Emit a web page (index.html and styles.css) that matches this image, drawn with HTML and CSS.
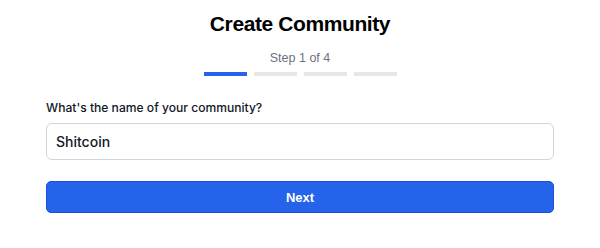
FILE: index.html
```
<!DOCTYPE html>
<html>
<head>
<meta charset="utf-8">
<link rel="stylesheet" href="styles.css">
</head>
<body>
<div class="page">
  <h1 class="title">Create Community</h1>
  <div class="step">Step 1 of 4</div>
  <div class="progress">
    <span class="bar active"></span>
    <span class="bar"></span>
    <span class="bar"></span>
    <span class="bar"></span>
  </div>
  <label class="label" for="name">What's the name of your community?</label>
  <input class="input" id="name" type="text" value="Shitcoin">
  <button class="btn">Next</button>
</div>
</body>
</html>
```
FILE: styles.css
```
html, body {
  margin: 0;
  padding: 0;
  background: #ffffff;
}
body {
  font-family: "Liberation Sans", Arial, sans-serif;
  color: #111827;
}
.page {
  width: 508px;
  margin: 0 auto;
  padding-top: 10px;
  display: flex;
  flex-direction: column;
}
.title {
  margin: 0;
  font-size: 21px;
  line-height: 28px;
  font-weight: 700;
  text-align: center;
  color: #000;
  letter-spacing: -0.4px;
}
.step {
  margin-top: 11px;
  font-size: 12.5px;
  line-height: 18px;
  text-align: center;
  color: #6b7280;
}
.progress {
  margin-top: 5px;
  display: flex;
  justify-content: center;
  gap: 7px;
}
.bar {
  width: 43px;
  height: 4px;
  background: #e5e7eb;
}
.bar.active {
  background: #2563eb;
}
.label {
  margin-top: 23px;
  font-family: Inter, "Liberation Sans", sans-serif;
  font-size: 12.1px;
  line-height: 18px;
  font-weight: 500;
  color: #111827;
}
.input {
  margin-top: 6px;
  box-sizing: border-box;
  height: 37px;
  width: 100%;
  border: 1px solid #d1d5db;
  border-radius: 6px;
  padding: 0 9px;
  font-family: Inter, "Liberation Sans", sans-serif;
  font-size: 14px;
  font-weight: 500;
  color: #111827;
  outline: none;
}
.btn {
  margin-top: 21px;
  box-sizing: border-box;
  height: 32px;
  width: 100%;
  border: 1px solid #1d4ed8;
  border-radius: 5px;
  background: #2563eb;
  color: #fff;
  font-family: inherit;
  font-size: 13px;
  font-weight: 700;
}
```
